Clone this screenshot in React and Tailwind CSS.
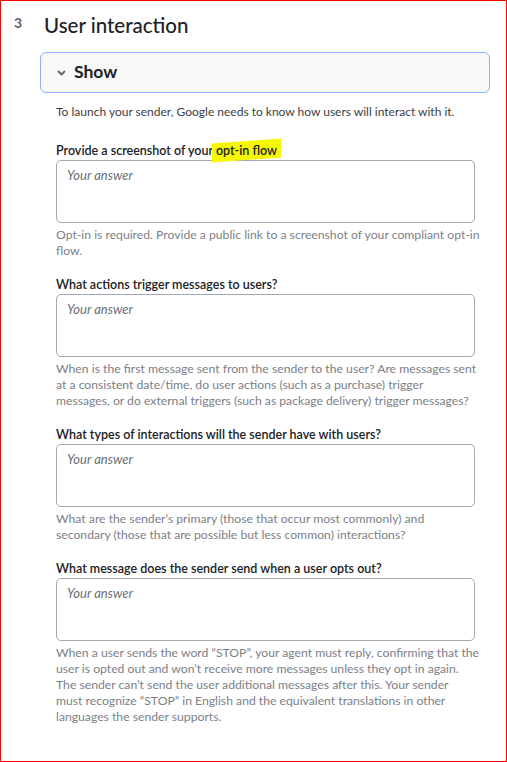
import React from "react";

const questions = [
  {
    label: "What actions trigger messages to users?",
    help: [
      "When is the first message sent from the sender to the user? Are messages sent",
      "at a consistent date/time, do user actions (such as a purchase) trigger",
      "messages, or do external triggers (such as package delivery) trigger messages?",
    ],
  },
  {
    label: "What types of interactions will the sender have with users?",
    help: [
      "What are the sender’s primary (those that occur most commonly) and",
      "secondary (those that are possible but less common) interactions?",
    ],
  },
  {
    label: "What message does the sender send when a user opts out?",
    help: [
      "When a user sends the word “STOP”, your agent must reply, confirming that the",
      "user is opted out and won’t receive more messages unless they opt in again.",
      "The sender can’t send the user additional messages after this. Your sender",
      "must recognize “STOP” in English and the equivalent translations in other",
      "languages the sender supports.",
    ],
  },
];

const Answer = () => (
  <div className="h-[63px] rounded-[5px] border border-[#a3a7b3] px-[10px] pt-[1px]">
    <span className="text-[13px] italic text-[#6b6f76]">Your answer</span>
  </div>
);

const Help = ({ lines }) => (
  <p className="mt-[4px] text-[12.2px] leading-[16px] text-[#7c8087]">
    {lines.map((l, i) => (
      <span key={i} className="block whitespace-nowrap">
        {l}
      </span>
    ))}
  </p>
);

const App = () => {
  return (
    <div
      className="w-[507px] h-[762px] border border-[#ff0000] bg-white overflow-hidden"
      style={{ fontFamily: 'Lato, "Noto Sans", sans-serif' }}
    >
      {/* Section header */}
      <div className="flex items-start pt-[10px]">
        <span className="w-[43px] pl-[13px] pt-[1px] text-[14px] font-bold text-[#5f6368]">
          3
        </span>
        <h2 className="text-[20.5px] leading-[28px] font-medium text-[#202124]">
          User interaction
        </h2>
      </div>

      {/* Show toggle */}
      <div className="ml-[39px] mr-[16px] mt-[13px] h-[41px] rounded-[6px] border border-[#8ab4f8] bg-[#f8f8f8] flex items-center pl-[16px]">
        <svg width="9" height="6" viewBox="0 0 9 6" className="mr-[8px] mt-[1px]">
          <path d="M1 1l3.5 3.5L8 1" fill="none" stroke="#5f6368" strokeWidth="1.8" />
        </svg>
        <span className="text-[17.5px] font-bold text-[#202124]">Show</span>
      </div>

      <div className="pl-[55px] pr-[31px]">
        <p className="mt-[11px] text-[12px] leading-[16px] text-[#3c4043]">
          To launch your sender, Google needs to know how users will interact with it.
        </p>

        {/* First question */}
        <div className="mt-[22px]">
          <p className="text-[12.5px] leading-[18px] font-semibold text-[#202124]">
            Provide a screenshot of your{" "}
            <span className="relative">
              <span className="absolute -left-[4px] -right-[4px] -top-[2px] -bottom-[2px] bg-[#f7f700] -skew-y-[4deg]" />
              <span className="relative">opt-in flow</span>
            </span>
          </p>
          <Answer />
          <Help
            lines={[
              "Opt-in is required. Provide a public link to a screenshot of your compliant opt-in",
              "flow.",
            ]}
          />
        </div>

        {questions.map((q, i) => (
          <div key={i} className="mt-[17px]">
            <p className="text-[12.5px] leading-[18px] font-semibold text-[#202124]">{q.label}</p>
            <Answer />
            <Help lines={q.help} />
          </div>
        ))}
      </div>
    </div>
  );
};

export default App;
